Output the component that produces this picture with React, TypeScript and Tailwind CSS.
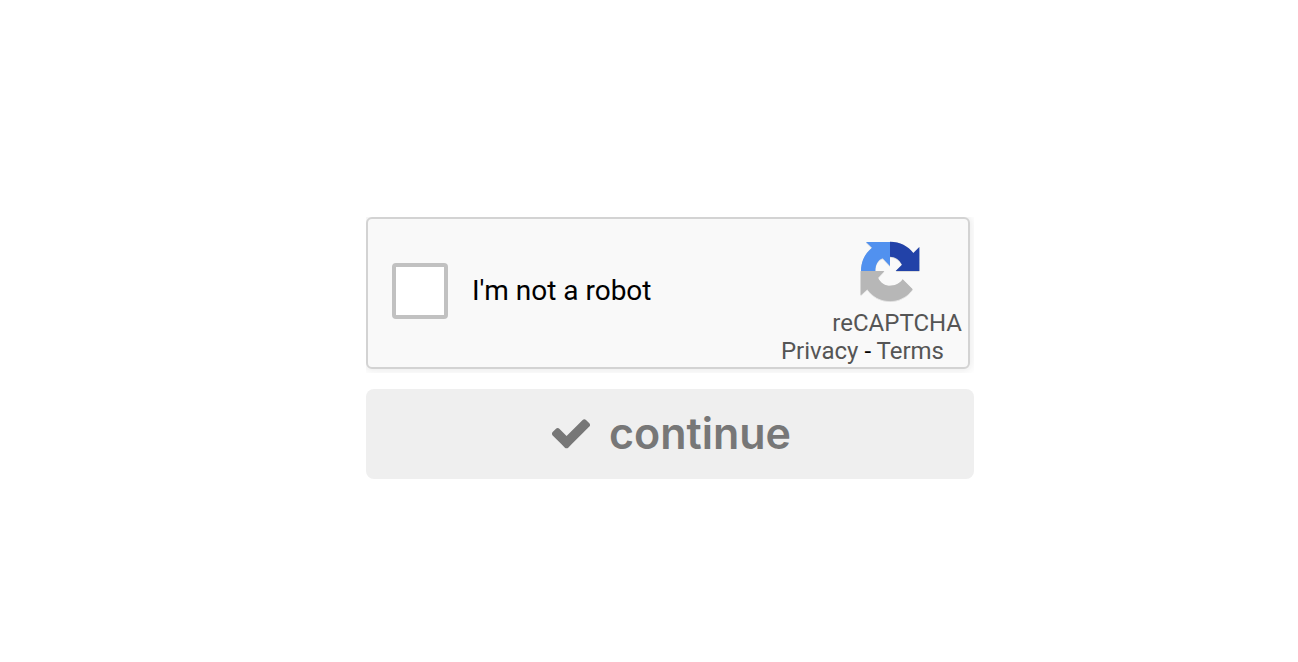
function RecaptchaLogo() {
  return (
    <svg viewBox="0 0 240 228" className="h-[76px] w-20" aria-hidden="true">
      <defs>
        <filter id="logo-shadow" x="-10%" y="-10%" width="120%" height="120%">
          <feDropShadow dx="0" dy="1" stdDeviation="2" floodOpacity="0.35" />
        </filter>
      </defs>
      <g filter="url(#logo-shadow)">
        <path
          fill="#b7b7b7"
          d="M32 117H103L84 137C92 153 105 161 120 161C136 161 150 154 158 142L188 172C172 194 148 207 121 207C92 207 68 195 52 172L32 190Z"
        />
        <path
          fill="#5191ef"
          d="M48 30H120V102L98 79C83 84 76 99 76 117H33C33 88 46 63 66 47Z"
        />
        <path
          fill="#2443a8"
          d="M120 29C150 29 174 42 190 63L208 45V117H137L156 98C148 82 136 74 120 74Z"
        />
      </g>
    </svg>
  );
}

function CheckIcon() {
  return (
    <svg viewBox="0 0 1792 1792" className="size-11" fill="currentColor" aria-hidden="true">
      <path d="M1671 566q0 40-28 68l-724 724-136 136q-28 28-68 28t-68-28l-136-136-362-362q-28-28-28-68t28-68l136-136q28-28 68-28t68 28l294 295 656-657q28-28 68-28t68 28l136 136q28 28 28 68z" />
    </svg>
  );
}

function Captcha() {
  return (
    <div className="overflow-hidden pr-1 pb-1">
      <div className="flex h-[152px] justify-between rounded-md border-2 border-[#d3d3d3] bg-[#f9f9f9] shadow-[0_0_8px_2px_rgba(0,0,0,0.08)]">
        <label className="flex items-center gap-6 pb-1 pl-6 font-[Roboto,sans-serif] text-[28px] leading-8 text-black">
          <input
            type="checkbox"
            className="size-14 appearance-none rounded border-4 border-[#c1c1c1] bg-white"
          />
          I'm not a robot
        </label>
        <div className="flex flex-col items-end pt-[13px] pr-1.5 font-[Roboto,sans-serif] text-2xl leading-7 text-[#555555]">
          <div className="pr-8 pb-px">
            <RecaptchaLogo />
          </div>
          <div>reCAPTCHA</div>
          <div className="pr-[18px] text-black">
            <a href="#privacy" className="text-[#555555]">Privacy</a>
            {" - "}
            <a href="#terms" className="text-[#555555]">Terms</a>
          </div>
        </div>
      </div>
    </div>
  );
}

export default function App() {
  return (
    <main className="flex min-h-screen justify-center bg-white pt-[217px] pl-[42px]">
      <form className="flex w-full max-w-[608px] flex-col gap-4">
        <Captcha />
        <button
          type="button"
          disabled
          className="flex h-[90px] items-center justify-center gap-4 rounded-lg bg-[#efefef] pb-0.5 font-[Inter,sans-serif] text-[43px] leading-none font-semibold text-[#777777]"
        >
          <CheckIcon />
          continue
        </button>
      </form>
    </main>
  );
}
